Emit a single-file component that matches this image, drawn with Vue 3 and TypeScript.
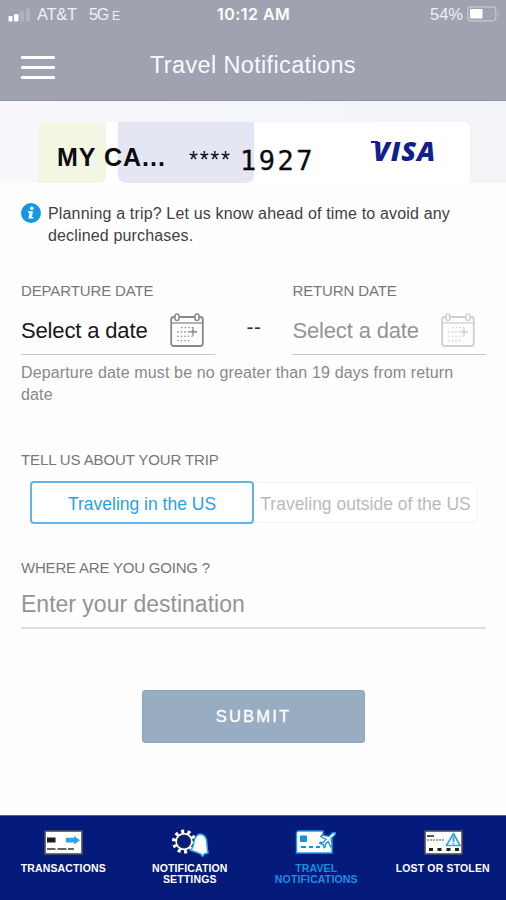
<script setup lang="ts">
import { ref } from 'vue'

type Region = 'us' | 'abroad'
const region = ref<Region>('us')
const destination = ref('')

const dotRows = [
  [12, 15.5, 19, 22.5],
  [8, 11.5, 15, 18.5, 22.5, 26],
  [8, 11.5, 15, 18.5, 22],
  [8, 11.5, 15, 18.5],
]
</script>

<template>
  <div class="screen">
    <header class="top">
      <div class="status">
        <svg class="signal" width="24" height="14" viewBox="0 0 24 14">
          <rect x="0.5" y="8" width="4" height="5.5" rx="1" fill="#fff" />
          <rect x="6" y="6" width="4.5" height="7.5" rx="1" fill="#fff" />
          <rect x="12" y="3" width="4" height="10.5" rx="1" fill="#b0b3be" />
          <rect x="18" y="0.5" width="4" height="13" rx="1" fill="#b0b3be" />
        </svg>
        <span class="carrier">AT&amp;T</span>
        <span class="network">5G<small>E</small></span>
        <span class="clock">10:12 AM</span>
        <span class="percent">54%</span>
        <svg class="battery" width="34" height="16" viewBox="0 0 34 16">
          <rect x="0.8" y="0.8" width="28" height="14" rx="3.5" fill="none" stroke="#c9cbd3" stroke-width="1.2" />
          <rect x="3" y="3" width="12.5" height="9.6" rx="1" fill="#fff" />
          <path d="M31 5.5v4.6q1.8-2.3 0-4.6z" fill="#c9cbd3" />
        </svg>
      </div>
      <div class="titlebar">
        <div class="menu"><i></i><i></i><i></i></div>
        <h1>Travel Notifications</h1>
      </div>
    </header>

    <section class="card-strip">
      <div class="card">
        <div class="tint green"></div>
        <div class="tint lilac"></div>
        <div class="card-row">
          <span class="card-name">MY CA...</span>
          <span class="stars">****</span>
          <span class="digits">1927</span>
          <span class="visa">VISA</span>
        </div>
      </div>
    </section>

    <main>
      <div class="info">
        <svg width="20" height="20" viewBox="0 0 20 20">
          <circle cx="10" cy="10" r="10" fill="#1398e6" />
          <circle cx="10.8" cy="5.2" r="1.8" fill="#fff" />
          <path d="M7 8.200h5L10.900 14h1.500v1.600H7.300L8.600 9.800H7z" fill="#fff" />
        </svg>
        <p>Planning a trip? Let us know ahead of time to avoid any<br />declined purchases.</p>
      </div>

      <div class="dates">
        <div v-for="side in ['DEPARTURE DATE', 'RETURN DATE']" :key="side" class="field" :class="{ muted: side === 'RETURN DATE' }">
          <label>{{ side }}</label>
          <div class="value">
            <span>Select a date</span>
            <svg class="cal" width="34" height="34" viewBox="0 0 34 34" fill="none" stroke="currentColor">
              <rect x="1.200" y="4" width="31.600" height="29" rx="2.500" stroke-width="1.800" />
              <path d="M1 10h32" stroke-width="1.300" />
              <rect x="5" y="1" width="4" height="6.400" rx="2" fill="#fff" stroke-width="1.500" />
              <rect x="25" y="1" width="4" height="6.400" rx="2" fill="#fff" stroke-width="1.500" />
              <g fill="currentColor" stroke="none">
                <template v-for="(row, r) in dotRows" :key="r">
                  <circle v-for="x in row" :key="x" :cx="x" :cy="14.5 + r * 4.4" r="0.8" />
                </template>
              </g>
              <path d="M19 18.800h8M23 14.500v8.500" stroke-width="1.100" />
              <path d="M23 16.800l2 2-2 2-2-2z" stroke-width="0.700" />
            </svg>
          </div>
        </div>
        <span class="dash">--</span>
      </div>
      <p class="hint">Departure date must be no greater than 19 days from return<br />date</p>

      <label>TELL US ABOUT YOUR TRIP</label>
      <div class="toggle">
        <button class="in" :class="{ on: region === 'us' }" @click="region = 'us'">Traveling in the US</button>
        <button class="out" :class="{ on: region === 'abroad' }" @click="region = 'abroad'">Traveling outside of the US</button>
      </div>

      <label class="where">WHERE ARE YOU GOING ?</label>
      <input v-model="destination" class="dest" placeholder="Enter your destination" />

      <button class="submit">SUBMIT</button>
    </main>

    <nav>
      <a>
        <svg class="nudge" width="40" height="26" viewBox="0 0 40 26">
          <rect x="1" y="1" width="37" height="23" fill="#fff" stroke="#4b4e58" stroke-width="1.6" />
          <rect x="3" y="7.5" width="8.5" height="5" fill="#1c1c1c" />
          <path d="M22 7.8h8V6l6 4.2-6 4.2v-2h-8z" fill="#29a3ea" />
          <path d="M3 19h8.500M13.500 19h9M24 19h6" stroke="#333" stroke-width="1.500" />
        </svg>
        <span>TRANSACTIONS</span>
      </a>
      <a>
        <svg width="38" height="28" viewBox="0 0 38 28">
          <g transform="translate(13 12.5)">
            <circle r="10" fill="none" stroke="#fff" stroke-width="4" stroke-dasharray="3 3.283" />
            <circle r="7.600" fill="#051b7b" stroke="#fff" stroke-width="2.200" />
            <circle r="6.500" fill="#051b7b" stroke="#34343c" stroke-width="1.200" />
          </g>
          <path d="M19.500 21q2.500-1.500 3.300-7 1-7.500 6-9 6.500.5 7 8.500.2 6 1.200 10.500l-3.500.8-2 2.500-2-2.500z" fill="#fff" stroke="#33a6ee" stroke-width="1.500" />
        </svg>
        <span>NOTIFICATION<br />SETTINGS</span>
      </a>
      <a class="active">
        <svg width="42" height="27" viewBox="0 0 42 27">
          <path d="M3 1.500h25v4l5 5 4-1v14H1.500V3z" fill="#fff" stroke="#209be9" stroke-width="1.400" />
          <rect x="5" y="6" width="7" height="6.500" rx="1" fill="#168fdd" />
          <path d="M6 17.500h5M14 17.500h4M21 17.500h4" stroke="#168fdd" stroke-width="1.800" />
          <path d="M40.500 3.200q-2.300-.7-4 1L34 6.800l-7-1.300-1.200 1.500 5.200 2.900-3 3.200-2.500-.3-.8 1 3.200 1.300 1.400 3.200 1-.8-.2-2.500 3-3 2.600 5.200 1.500-1.200L36 9l2.800-2.500q1.800-1.500 1.700-3.300z" fill="#fff" stroke="#188edc" stroke-width="1.300" />
        </svg>
        <span>TRAVEL<br />NOTIFICATIONS</span>
      </a>
      <a>
        <svg class="nudge" width="40" height="26" viewBox="0 0 40 26">
          <rect x="1" y="1" width="37" height="23" fill="#fff" stroke="#4b4e58" stroke-width="1.600" />
          <path d="M3 6h7" stroke="#555" stroke-width="2" />
          <path d="M3 10h17" stroke="#888" stroke-width="1.300" stroke-dasharray="2 1" />
          <path d="M5 19.500h4M13.500 19.500h4M22.500 19.500h4M31 19.500h4" stroke="#222" stroke-width="3" />
          <path d="M29.500 3.500 36 15.500H22.500z" fill="#fff" stroke="#35a3e6" stroke-width="1.700" stroke-linejoin="round" />
          <path d="M29.500 6.500v5.500M29.500 13v1.600" stroke="#35a3e6" stroke-width="1.900" />
        </svg>
        <span>LOST OR STOLEN</span>
      </a>
    </nav>
  </div>
</template>

<style>
body {
  margin: 0;
  background: #fff;
}
</style>

<style scoped>
* {
  box-sizing: border-box;
}
.screen {
  width: 506px;
  height: 900px;
  display: flex;
  flex-direction: column;
  background: #fefefe;
  font-family: "Liberation Sans", Arial, sans-serif;
  overflow: hidden;
  white-space: nowrap;
}
.top {
  height: 101px;
  background: #9fa3af;
  border-bottom: 1px solid #93939f;
  color: #fff;
}
.status {
  height: 29px;
  display: flex;
  align-items: center;
  line-height: 29px;
}
.signal {
  margin-left: 8px;
}
.carrier {
  width: 52px;
  margin-left: 5px;
  font-size: 16.5px;
  letter-spacing: -0.3px;
  color: #eef0f5;
}
.network {
  width: 128px;
  height: 29px;
  font-size: 16px;
  letter-spacing: -1.2px;
  color: #eef0f5;
}
.network small {
  font-size: 12px;
  line-height: 1;
  margin-left: 4px;
}
.clock {
  width: 213px;
  font-family: Inter, sans-serif;
  font-weight: 600;
  font-size: 16px;
  letter-spacing: 0.45px;
}
.percent {
  width: 37px;
  font-size: 16.5px;
  color: #eef0f5;
}
.battery {
  margin-top: -2px;
}
.titlebar {
  height: 72px;
  display: flex;
  padding-left: 21px;
}
.menu {
  width: 34px;
  padding-top: 27px;
  display: flex;
  flex-direction: column;
  gap: 7px;
}
.menu i {
  height: 3px;
  background: #fff;
  border-radius: 1px;
}
h1 {
  margin: 22px 0 0 95px;
  font-size: 23.5px;
  line-height: 28px;
  font-weight: 400;
  letter-spacing: 0.35px;
  color: #f8f9ff;
}
.card-strip {
  height: 82px;
  padding: 21px 36px 0 38px;
  background: linear-gradient(90deg, #f8f8fc, #f3f4f7);
}
.card {
  height: 61px;
  position: relative;
  background: #fff;
  border-radius: 5px 6px 0 0;
  overflow: hidden;
}
.tint {
  position: absolute;
  top: 0;
  height: 61px;
}
.green {
  left: 0;
  width: 68px;
  background: #f1f7e3;
  border-radius: 0 0 6px 0;
}
.lilac {
  left: 80px;
  width: 136px;
  background: #e4e6f3;
  border-radius: 0 0 8px 8px;
}
.card-row {
  position: relative;
  display: flex;
  height: 61px;
  padding-left: 19px;
  color: #0c0c10;
}
.card-name {
  width: 132px;
  margin-top: 20px;
  font-size: 25px;
  line-height: 30px;
  font-weight: 700;
  letter-spacing: 1px;
}
.stars {
  width: 51px;
  margin-top: 24px;
  font-size: 23px;
  line-height: 28px;
  letter-spacing: 1.7px;
}
.digits {
  width: 132px;
  margin-top: 23px;
  font-family: "DejaVu Sans Mono", monospace;
  font-size: 27px;
  line-height: 32px;
  letter-spacing: 2.5px;
  -webkit-text-stroke: 0.3px;
}
.visa {
  position: relative;
  margin-top: 13px;
  padding-left: 1px;
  font-family: "Open Sans", sans-serif;
  font-style: italic;
  font-weight: 800;
  font-size: 27px;
  line-height: 32px;
  letter-spacing: 1px;
  color: #10218b;
}
.visa::before {
  content: "";
  position: absolute;
  left: -1px;
  top: 6px;
  width: 7px;
  height: 2px;
  background: #10218b;
}
main {
  flex: 1;
  padding: 0 20px 0 21px;
  display: flex;
  flex-direction: column;
}
.info {
  display: flex;
  height: 98px;
  padding-top: 20px;
  gap: 7px;
}
p {
  margin: 0;
  font-size: 16px;
  line-height: 22px;
}
.info p {
  color: #3f3f43;
  letter-spacing: 0.16px;
}
label {
  display: block;
  font-size: 15px;
  line-height: 20px;
  letter-spacing: -0.12px;
  color: #77777a;
}
.dates {
  display: flex;
  height: 74px;
}
.field {
  width: 194px;
  border-bottom: 1px solid #c8c8c8;
}
.muted {
  order: 2;
}
.value {
  display: flex;
  padding-top: 12px;
  font-size: 22px;
  line-height: 36px;
  letter-spacing: -0.15px;
  color: #18181a;
}
.value span {
  width: 149px;
}
.cal {
  color: #88888b;
}
.muted .value {
  color: #949494;
}
.muted .cal {
  color: #cfcfcf;
}
.dash {
  order: 1;
  width: 78px;
  padding: 34px 0 0 32px;
  font-size: 21px;
  line-height: 24px;
  color: #333;
  letter-spacing: 0.5px;
}
.hint {
  margin-top: 7px;
  height: 88px;
  letter-spacing: 0.14px;
  color: #88888a;
}
.toggle {
  display: flex;
  height: 43px;
  margin: 11px 0 34px 9px;
}
button {
  padding: 0;
  font-family: inherit;
  background: #fff;
}
.toggle button {
  padding-top: 3px;
  font-size: 17.5px;
  color: #b9bbbb;
  border: 1px solid #f3f3f3;
}
.toggle .in {
  width: 224px;
  border-radius: 4px 0 0 4px;
}
.toggle .out {
  width: 224px;
  height: 41px;
  margin-top: 1px;
  border-left: 0;
  border-radius: 0 6px 6px 0;
}
.toggle button.on {
  color: #2b9fe4;
  border: 2px solid #61b3e8;
  border-radius: 4px;
}
.where {
  letter-spacing: -0.2px;
}
.dest {
  height: 51px;
  padding: 3px 0 0;
  border: 0;
  border-bottom: 2px solid #dedfdf;
  background: transparent;
  font-family: inherit;
  font-size: 23px;
  outline: none;
}
.dest::placeholder {
  color: #949494;
  opacity: 1;
}
.submit {
  width: 223px;
  height: 53px;
  margin: 61px 0 0 121px;
  background: #98adc2;
  border: 1px solid #8aa6c0;
  border-radius: 3px;
  font-size: 16.5px;
  letter-spacing: 2.2px;
  -webkit-text-stroke: 0.3px;
  color: #fff;
}
nav {
  height: 85px;
  display: grid;
  grid-template-columns: repeat(4, 126.5px);
  background: #051b7b;
  border-top: 1px solid #515c9b;
}
nav a {
  display: flex;
  flex-direction: column;
  align-items: center;
  padding-top: 13px;
  font-size: 10.5px;
  line-height: 11px;
  font-weight: 700;
  letter-spacing: 0.15px;
  text-align: center;
  color: #fff;
}
nav svg {
  height: 28px;
  margin-bottom: 6px;
}
nav .nudge {
  margin-left: 2px;
}
nav .active {
  color: #168fe0;
}
</style>
